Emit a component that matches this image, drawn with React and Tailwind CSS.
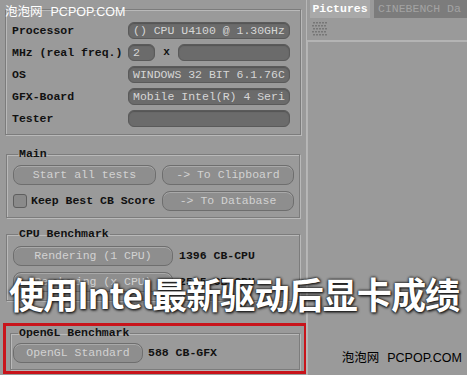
import React from 'react';

const mono = { fontFamily: '"Liberation Mono", "Courier New", monospace' };
const sans = { fontFamily: 'Arial, "Liberation Sans", "Noto Sans CJK SC", sans-serif' };

function Field({ children, className = '' }) {
  return (
    <div
      className={`h-[17px] rounded-[6px] bg-[#6b6b6b] border border-[#5a5a5a] shadow-[inset_0_1px_1px_#555] px-[4px] text-[11.5px] leading-[15px] text-[#d6d6d6] whitespace-nowrap overflow-hidden ${className}`}
    >
      {children}
    </div>
  );
}

function Btn({ children, className = '' }) {
  return (
    <div
      className={`h-[20px] rounded-[8px] bg-[#8e8e8e] border border-[#6e6e6e] shadow-[inset_0_1px_0_#a9a9a9] flex items-center justify-center text-[11.5px] text-[#d2d2d2] whitespace-nowrap ${className}`}
    >
      {children}
    </div>
  );
}

function Group({ title, className = '', children }) {
  return (
    <fieldset
      className={`border border-[#7c7c7c] shadow-[1px_1px_0_#b9b9b9,inset_1px_1px_0_#b9b9b9] ${className}`}
    >
      <legend className="ml-[5px] px-[1px] text-[11.5px] leading-[14px] font-bold text-[#111]">{title}</legend>
      {children}
    </fieldset>
  );
}

const infoRows = [
  { label: 'Processor', value: '() CPU U4100 @ 1.30GHz' },
  { label: 'MHz (real freq.)', mhz: true },
  { label: 'OS', value: 'WINDOWS 32 BIT 6.1.76C' },
  { label: 'GFX-Board', value: 'Mobile Intel(R) 4 Seri' },
  { label: 'Tester', value: '' },
];

export default function App() {
  return (
    <div className="relative w-[467px] h-[375px] overflow-hidden bg-[#9a9a9a] flex" style={mono}>
      {/* left panel */}
      <div className="w-[306px] shrink-0 flex flex-col pl-[5px] pr-[5px]">
        <div className="mt-[9px] h-[126px] border border-[#7c7c7c] shadow-[1px_1px_0_#b9b9b9,inset_1px_1px_0_#b9b9b9] pt-[12px] pl-[6px] pr-[10px] flex flex-col gap-[5px]">
          {infoRows.map((r) => (
            <div key={r.label} className="flex items-center h-[17px]">
              <div className="w-[116px] shrink-0 text-[11.5px] font-bold text-[#111] whitespace-nowrap">{r.label}</div>
              {r.mhz ? (
                <div className="flex-1 flex items-center">
                  <Field className="w-[27px]">2</Field>
                  <span className="w-[23px] text-center text-[11px] font-bold text-[#111]">x</span>
                  <Field className="flex-1" />
                </div>
              ) : (
                <Field className="flex-1">{r.value}</Field>
              )}
            </div>
          ))}
        </div>

        <Group title="Main" className="mt-[12px] mx-[1px] pt-[4px] pb-[6px] pl-[6px] pr-[4px]">
          <div className="flex gap-[6px]">
            <Btn className="w-[143px]">Start all tests</Btn>
            <Btn className="w-[132px]">-&gt; To Clipboard</Btn>
          </div>
          <div className="flex gap-[6px] mt-[6px]">
            <div className="w-[143px] flex items-center gap-[4px]">
              <div className="w-[14px] h-[14px] rounded-[3px] bg-[#8a8a8a] border border-[#5e5e5e]" />
              <span className="text-[11.5px] font-bold text-[#111] whitespace-nowrap">Keep Best CB Score</span>
            </div>
            <Btn className="w-[132px]">-&gt; To Database</Btn>
          </div>
        </Group>

        <Group title="CPU Benchmark" className="mt-[9px] mx-[1px] pt-[5px] pb-[8px] pl-[6px]">
          <div className="flex items-center gap-[6px]">
            <Btn className="w-[160px]">Rendering (1 CPU)</Btn>
            <span className="text-[11.5px] font-bold text-[#111]">1396 CB-CPU</span>
          </div>
          <div className="flex items-center gap-[6px] mt-[6px]">
            <Btn className="w-[160px]">Rendering (x CPU)</Btn>
            <span className="text-[11.5px] font-bold text-[#111]">2595 CB-CPU</span>
          </div>
        </Group>

        <div className="mt-auto mb-[1px] -ml-[2px] w-[304px] h-[51px] border-[3px] border-[#c8141b] px-[4px]">
          <Group title="OpenGL Benchmark" className="h-[44px] pt-[3px] pl-[2px]">
            <div className="flex items-center gap-[5px]">
              <Btn className="w-[130px]">OpenGL Standard</Btn>
              <span className="text-[11.5px] font-bold text-[#111]">588 CB-GFX</span>
            </div>
          </Group>
        </div>
      </div>

      {/* divider */}
      <div className="w-[1px] bg-[#b7b7b7]" />

      {/* right panel */}
      <div className="flex-1 flex flex-col">
        <div className="flex h-[18px] pl-[3px] gap-[4px]">
          <div className="w-[60px] bg-[#a9a9a9] text-white font-bold text-[11.5px] flex items-center justify-center">Pictures</div>
          <div className="flex-1 min-w-0 bg-[#7c7c7c] text-[#a3a3a3] text-[11.5px] flex items-center pl-[4px] whitespace-nowrap overflow-hidden">CINEBENCH Da</div>
        </div>
        <div className="h-[24px] flex items-center pl-[5px] border-b-2 border-[#b4b4b4]">
          <svg width="15" height="14" viewBox="0 0 15 14">
            {[0, 3, 6, 9, 12].map((y) =>
              [0, 3, 6, 9, 12].map((x) => (
                <rect key={`${x}-${y}`} x={x + (y % 6 === 0 ? 1 : 0)} y={y} width="2" height="1.5" fill="#777" />
              ))
            )}
          </svg>
        </div>
        <div className="flex-1 border-l border-[#b4b4b4]" />
      </div>

      {/* watermarks and caption */}
      <div className="absolute left-[5px] top-[3px] text-[12.5px] text-white whitespace-nowrap" style={sans}>
        泡泡网<span className="ml-[8px]">PCPOP.COM</span>
      </div>
      <div className="absolute right-[5px] bottom-[7px] text-[12.5px] text-black whitespace-nowrap" style={sans}>
        泡泡网<span className="ml-[8px]">PCPOP.COM</span>
      </div>
      <div
        className="absolute left-[9px] top-[268px] origin-left scale-x-[0.975] text-[36px] leading-[50px] font-bold text-white whitespace-nowrap tracking-[-1px] [text-shadow:0_0_3px_#222,0_0_2px_#222,1px_1px_3px_#000]"
        style={{ fontFamily: '"Noto Sans CJK SC", "Noto Sans", sans-serif' }}
      >
        使用Intel最新驱动后显卡成绩
      </div>
    </div>
  );
}
